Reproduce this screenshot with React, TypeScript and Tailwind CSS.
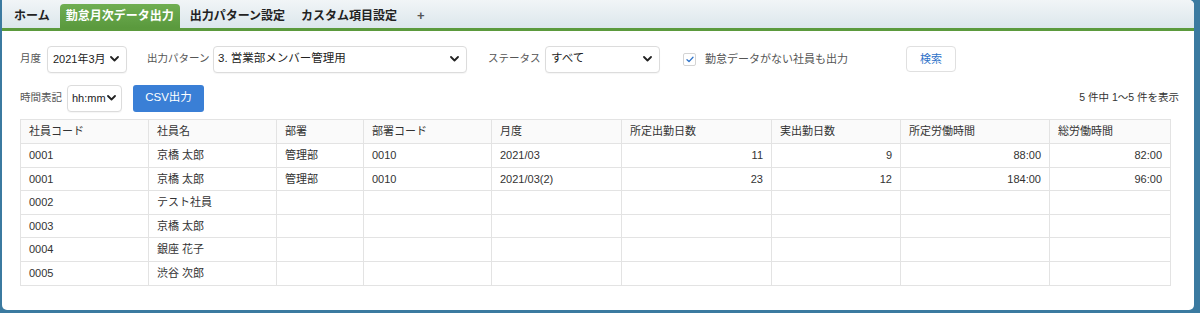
const font = { fontFamily: '"Liberation Sans", "Noto Sans CJK JP", sans-serif' }

type Row = {
	code: string
	name: string
	dept?: string
	deptCode?: string
	month?: string
	planDays?: string
	actualDays?: string
	planHours?: string
	totalHours?: string
}

const rows: Row[] = [
	{ code: '0001', name: '京橋 太郎', dept: '管理部', deptCode: '0010', month: '2021/03', planDays: '11', actualDays: '9', planHours: '88:00', totalHours: '82:00' },
	{ code: '0001', name: '京橋 太郎', dept: '管理部', deptCode: '0010', month: '2021/03(2)', planDays: '23', actualDays: '12', planHours: '184:00', totalHours: '96:00' },
	{ code: '0002', name: 'テスト社員' },
	{ code: '0003', name: '京橋 太郎' },
	{ code: '0004', name: '銀座 花子' },
	{ code: '0005', name: '渋谷 次郎' },
]

const columns: { label: string; key: keyof Row; w: string; right?: boolean }[] = [
	{ label: '社員コード', key: 'code', w: 'w-[128px]' },
	{ label: '社員名', key: 'name', w: 'w-[128px]' },
	{ label: '部署', key: 'dept', w: 'w-[87px]' },
	{ label: '部署コード', key: 'deptCode', w: 'w-[128px]' },
	{ label: '月度', key: 'month', w: 'w-[130px]' },
	{ label: '所定出勤日数', key: 'planDays', w: 'w-[150px]', right: true },
	{ label: '実出勤日数', key: 'actualDays', w: 'w-[129px]', right: true },
	{ label: '所定労働時間', key: 'planHours', w: 'w-[149px]', right: true },
	{ label: '総労働時間', key: 'totalHours', w: 'w-[121px]', right: true },
]

function Chevron() {
	return (
		<svg width="9" height="6" viewBox="0 0 9 6" fill="none" className="shrink-0">
			<path d="M1 1L4.5 4.5L8 1" stroke="#222" strokeWidth="1.8" strokeLinecap="round" strokeLinejoin="round" />
		</svg>
	)
}

function Select({ value, className }: { value: string; className: string }) {
	return (
		<div className={`flex items-center justify-between h-[27px] rounded-[4px] border border-[#dcdcdc] bg-white text-[#222] shadow-[0_1px_1px_rgba(0,0,0,0.04)] ${className}`}>
			<span className="whitespace-nowrap">{value}</span>
			<Chevron />
		</div>
	)
}

function Tab({ label, active }: { label: string; active?: boolean }) {
	return active ? (
		<div className="h-[24px] mt-[4px] px-[6px] flex items-center rounded-t-[4px] bg-gradient-to-b from-[#6fae52] to-[#5a993d] text-white text-[12px] font-bold">
			{label}
		</div>
	) : (
		<div className="h-[24px] mt-[4px] px-[6px] flex items-center text-[#222] text-[12px] font-bold">{label}</div>
	)
}

export default function App() {
	return (
		<div style={font} className="w-[1200px] h-[313px] bg-[#3b7aa0] pl-[2px] pr-[6px] pb-[3px]">
			<div className="h-full bg-white rounded-b-[5px] rounded-tr-[5px] overflow-hidden flex flex-col">
				<div className="h-[31px] shrink-0 bg-gradient-to-b from-[#f1f5f7] to-[#dce7ec] border-b-[3px] border-[#5b9a3d] flex items-start pl-[6px] gap-[4px]">
					<Tab label="ホーム" />
					<Tab label="勤怠月次データ出力" active />
					<Tab label="出力パターン設定" />
					<Tab label="カスタム項目設定" />
					<div className="h-[24px] mt-[4px] ml-[10px] flex items-center text-[#555] text-[13px] font-bold">+</div>
				</div>

				<div className="px-[18px] pt-[14px] flex flex-col">
					<div className="flex items-center h-[28px] text-[10.5px] text-[#555]">
						<span className="w-[27px]">月度</span>
						<Select value="2021年3月" className="w-[80px] pl-[5px] pr-[7px] text-[11px]" />
						<span className="ml-[20px] w-[66px]">出力パターン</span>
						<Select value="3. 営業部メンバー管理用" className="w-[254px] pl-[4px] pr-[7px] text-[11.5px]" />
						<span className="ml-[21px] w-[57px]">ステータス</span>
						<Select value="すべて" className="w-[115px] pl-[5px] pr-[7px] text-[11.5px]" />
						<div className="ml-[23px] w-[13px] h-[13px] rounded-[2px] border border-[#d4d4d4] bg-white flex items-center justify-center">
							<svg width="8" height="7" viewBox="0 0 8 7" fill="none">
								<path d="M1 3.8L3 5.6L7 1.2" stroke="#2f73c9" strokeWidth="1.3" strokeLinecap="round" strokeLinejoin="round" />
							</svg>
						</div>
						<span className="ml-[9px] text-[11px]">勤怠データがない社員も出力</span>
						<div className="ml-[58px] h-[26px] w-[50px] rounded-[4px] border border-[#e0e0e0] bg-white flex items-center justify-center text-[11px] text-[#2f73c9]">
							検索
						</div>
					</div>

					<div className="flex items-center h-[28px] mt-[11px] text-[10.5px] text-[#555]">
						<span className="w-[47px]">時間表記</span>
						<Select value="hh:mm" className="w-[55px] pl-[4px] pr-[5px] text-[11px]" />
						<div className="ml-[11px] h-[27px] w-[71px] rounded-[3px] bg-[#3a7fd6] flex items-center justify-center text-white text-[11.5px]">
							CSV出力
						</div>
						<span className="ml-auto mr-[-3px] text-[10.5px] text-[#333]">5 件中 1〜5 件を表示</span>
					</div>

					<table className="mt-[7px] border-collapse text-[11px] text-[#333] table-fixed w-[1150px]">
						<thead>
							<tr className="h-[24px] bg-[#fafafa]">
								{columns.map((c) => (
									<th key={c.label} className={`${c.w} border border-[#e3e3e3] px-[8px] text-left font-normal`}>
										{c.label}
									</th>
								))}
							</tr>
						</thead>
						<tbody>
							{rows.map((r, i) => (
								<tr key={i} className="h-[23.6px]">
									{columns.map((c) => (
										<td key={c.label} className={`border border-[#e3e3e3] px-[8px] ${c.right ? 'text-right' : 'text-left'}`}>
											{r[c.key] ?? ''}
										</td>
									))}
								</tr>
							))}
						</tbody>
					</table>
				</div>
			</div>
		</div>
	)
}
